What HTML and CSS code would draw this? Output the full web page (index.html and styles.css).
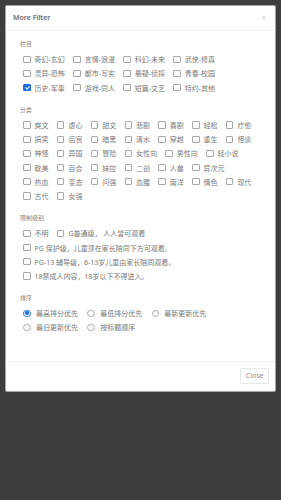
FILE: index.html
```html
<!DOCTYPE html>
<html lang="zh">
<head>
<meta charset="utf-8">
<title>More Filter</title>
<link rel="stylesheet" href="styles.css">
</head>
<body>
<div class="modal">
  <div class="modal-header">
    <h5 class="modal-title">More Filter</h5>
    <span class="close">×</span>
  </div>
  <div class="modal-body">
    <div class="section">
      <div class="section-label">栏目</div>
      <div class="options">
        <label class="opt"><input type="checkbox" class="cb">奇幻-玄幻</label>
        <label class="opt"><input type="checkbox" class="cb">言情-浪漫</label>
        <label class="opt"><input type="checkbox" class="cb">科幻-未来</label>
        <label class="opt"><input type="checkbox" class="cb">武侠-修真</label>
        <label class="opt"><input type="checkbox" class="cb">灵异-恐怖</label>
        <label class="opt"><input type="checkbox" class="cb">都市-写实</label>
        <label class="opt"><input type="checkbox" class="cb">悬疑-侦探</label>
        <label class="opt"><input type="checkbox" class="cb">青春-校园</label>
        <label class="opt"><input type="checkbox" class="cb" checked>历史-军事</label>
        <label class="opt"><input type="checkbox" class="cb">游戏-同人</label>
        <label class="opt"><input type="checkbox" class="cb">短篇-文艺</label>
        <label class="opt"><input type="checkbox" class="cb">特约-其他</label>
      </div>
    </div>
    <div class="section">
      <div class="section-label">分类</div>
      <div class="options">
        <label class="opt"><input type="checkbox" class="cb">爽文</label>
        <label class="opt"><input type="checkbox" class="cb">虐心</label>
        <label class="opt"><input type="checkbox" class="cb">甜文</label>
        <label class="opt"><input type="checkbox" class="cb">悲剧</label>
        <label class="opt"><input type="checkbox" class="cb">喜剧</label>
        <label class="opt"><input type="checkbox" class="cb">轻松</label>
        <label class="opt"><input type="checkbox" class="cb">疗愈</label>
        <label class="opt"><input type="checkbox" class="cb">搞笑</label>
        <label class="opt"><input type="checkbox" class="cb">后宫</label>
        <label class="opt"><input type="checkbox" class="cb">暗黑</label>
        <label class="opt"><input type="checkbox" class="cb">清水</label>
        <label class="opt"><input type="checkbox" class="cb">穿越</label>
        <label class="opt"><input type="checkbox" class="cb">重生</label>
        <label class="opt"><input type="checkbox" class="cb">怪谈</label>
        <label class="opt"><input type="checkbox" class="cb">神怪</label>
        <label class="opt"><input type="checkbox" class="cb">异国</label>
        <label class="opt"><input type="checkbox" class="cb">冒险</label>
        <label class="opt"><input type="checkbox" class="cb">女性向</label>
        <label class="opt"><input type="checkbox" class="cb">男性向</label>
        <label class="opt"><input type="checkbox" class="cb">轻小说</label>
        <label class="opt"><input type="checkbox" class="cb">耽美</label>
        <label class="opt"><input type="checkbox" class="cb">百合</label>
        <label class="opt"><input type="checkbox" class="cb">妹控</label>
        <label class="opt"><input type="checkbox" class="cb">二创</label>
        <label class="opt"><input type="checkbox" class="cb">人兽</label>
        <label class="opt"><input type="checkbox" class="cb">异次元</label>
        <label class="opt"><input type="checkbox" class="cb">热血</label>
        <label class="opt"><input type="checkbox" class="cb">变态</label>
        <label class="opt"><input type="checkbox" class="cb">问强</label>
        <label class="opt"><input type="checkbox" class="cb">血腥</label>
        <label class="opt"><input type="checkbox" class="cb">南洋</label>
        <label class="opt"><input type="checkbox" class="cb">情色</label>
        <label class="opt"><input type="checkbox" class="cb">现代</label>
        <label class="opt"><input type="checkbox" class="cb">古代</label>
        <label class="opt"><input type="checkbox" class="cb">女强</label>
      </div>
    </div>
    <div class="section">
      <div class="section-label">限制级别</div>
      <div class="options">
        <label class="opt"><input type="checkbox" class="cb">不明</label>
        <label class="opt"><input type="checkbox" class="cb">G普通级， 人人皆可观看</label>
        <label class="opt"><input type="checkbox" class="cb">PG 保护级，儿童须在家长陪同下方可观看。</label>
        <label class="opt"><input type="checkbox" class="cb">PG-13 辅导级，6-13岁儿童由家长陪同观看。</label>
        <label class="opt"><input type="checkbox" class="cb">18禁成人内容，18岁以下不得进入。</label>
      </div>
    </div>
    <div class="section">
      <div class="section-label">排序</div>
      <div class="options">
        <label class="opt radio-opt"><input type="radio" name="sort" class="rb" checked>最高排分优先</label>
        <label class="opt radio-opt"><input type="radio" name="sort" class="rb">最低排分优先</label>
        <label class="opt radio-opt"><input type="radio" name="sort" class="rb">最新更新优先</label>
        <label class="opt radio-opt"><input type="radio" name="sort" class="rb">最旧更新优先</label>
        <label class="opt radio-opt"><input type="radio" name="sort" class="rb">按标题顺序</label>
      </div>
    </div>
  </div>
  <div class="modal-footer">
    <button class="btn-close" type="button">Close</button>
  </div>
</div>
</body>
</html>
```
FILE: styles.css
```css
html, body {
  margin: 0;
  padding: 0;
}
body {
  background: #3d3d3d;
  height: 500px;
  padding: 5px;
  box-sizing: border-box;
  font-family: "Noto Sans", "Noto Sans CJK SC", sans-serif;
}
.modal {
  width: 271px;
  background: #fff;
  border: 1px solid rgba(0, 0, 0, 0.35);
  border-radius: 2px;
  box-sizing: border-box;
}
.modal-header {
  display: flex;
  align-items: center;
  justify-content: space-between;
  height: 24px;
  padding: 0 7px 0 7px;
  border-bottom: 1px solid #f0f0f0;
}
.modal-title {
  margin: 0;
  font-size: 7px;
  font-weight: 600;
  color: #6a6a6a;
  line-height: 10px;
}
.close {
  font-size: 8px;
  color: #cfcfcf;
  line-height: 8px;
  margin-right: 2px;
}
.modal-body {
  padding: 8.8px 14px 26px 14px;
  display: flex;
  flex-direction: column;
  gap: 10.8px;
}
.section-label {
  font-size: 6px;
  line-height: 9px;
  color: #858585;
  margin-bottom: 3.4px;
}
.options {
  display: flex;
  flex-wrap: wrap;
  column-gap: 8.5px;
  margin: 0 3.3px;
}
.opt {
  display: flex;
  align-items: center;
  height: 14.2px;
  font-size: 7px;
  color: #7a7a7a;
  white-space: nowrap;
}
.cb, .rb {
  appearance: none;
  -webkit-appearance: none;
  margin: 0 4px 0 0;
  width: 7.3px;
  height: 7.3px;
  border: 1px solid #a8a8a8;
  box-sizing: border-box;
  background: #fff;
  position: relative;
  flex: none;
}
.cb {
  border-radius: 1px;
}
.cb:checked {
  background: #1c6fe3;
  border-color: #1c6fe3;
}
.cb:checked::after {
  content: "";
  position: absolute;
  left: 1.7px;
  top: 0.2px;
  width: 1.6px;
  height: 3.4px;
  border: solid #fff;
  border-width: 0 1.1px 1.1px 0;
  transform: rotate(40deg);
}
.rb {
  border-radius: 50%;
  margin-right: 5.4px;
}
.radio-opt {
  margin-right: 1px;
}
.rb:checked {
  border-color: #1c6fe3;
}
.rb:checked::after {
  content: "";
  position: absolute;
  left: 50%;
  top: 50%;
  width: 3.6px;
  height: 3.6px;
  margin: -1.8px 0 0 -1.8px;
  border-radius: 50%;
  background: #1c6fe3;
}
.modal-footer {
  display: flex;
  justify-content: flex-end;
  border-top: 1px solid #f2f2f2;
  padding: 6.6px 6px 6.6px 6px;
}
.btn-close {
  font-family: "Noto Sans", sans-serif;
  font-size: 7px;
  line-height: 8px;
  color: #8f8f8f;
  background: #fff;
  border: 1px solid #e8e8e8;
  border-radius: 2px;
  padding: 3px 4.5px;
  margin: 0;
}
```
